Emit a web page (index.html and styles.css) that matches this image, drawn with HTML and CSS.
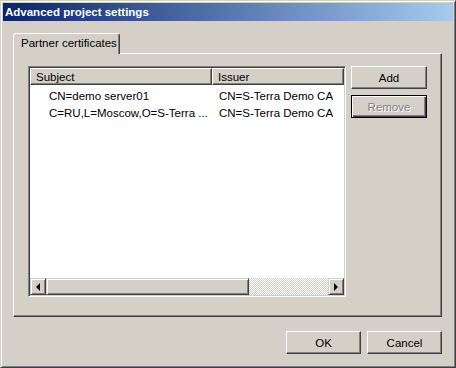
FILE: index.html
```html
<!DOCTYPE html>
<html lang="en">
<head>
    <meta charset="UTF-8">
    <title>Advanced project settings</title>
    <link rel="stylesheet" href="styles.css">
</head>
<body>
    <div class="dialog">
        <div class="titlebar">Advanced project settings</div>
        <div class="content">
            <div class="tabs">
                <div class="tab">Partner certificates</div>
            </div>
            <div class="tab-panel">
                <div class="listview">
                    <div class="lv-header">
                        <div class="lv-col col-subject">Subject</div>
                        <div class="lv-col col-issuer">Issuer</div>
                    </div>
                    <div class="lv-rows">
                        <div class="lv-row">
                            <div class="cell col-subject">CN=demo server01</div>
                            <div class="cell col-issuer">CN=S-Terra Demo CA</div>
                        </div>
                        <div class="lv-row">
                            <div class="cell col-subject">C=RU,L=Moscow,O=S-Terra ...</div>
                            <div class="cell col-issuer">CN=S-Terra Demo CA</div>
                        </div>
                    </div>
                    <div class="hscroll">
                        <div class="sb-btn"><span class="arrow-left"></span></div>
                        <div class="sb-track">
                            <div class="sb-thumb"></div>
                        </div>
                        <div class="sb-btn"><span class="arrow-right"></span></div>
                    </div>
                </div>
                <div class="side-buttons">
                    <button class="btn">Add</button>
                    <button class="btn btn-default" disabled>Remove</button>
                </div>
            </div>
            <div class="footer">
                <button class="btn btn-wide">OK</button>
                <button class="btn btn-wide">Cancel</button>
            </div>
        </div>
    </div>
</body>
</html>
```

FILE: styles.css
```css
* {
    box-sizing: border-box;
}

body {
    margin: 0;
    background: #d4d0c8;
    font-family: "Liberation Sans", Arial, sans-serif;
    font-size: 11.5px;
    color: #000;
}

/* window frame */
.dialog {
    width: 456px;
    height: 368px;
    display: flex;
    flex-direction: column;
    padding: 2px;
    background: #d4d0c8;
    border: 1px solid;
    border-color: #d4d0c8 #404040 #404040 #d4d0c8;
    box-shadow: inset 1px 1px #fff, inset -1px -1px #808080;
}

.titlebar {
    height: 18px;
    padding: 0 0 0 2px;
    line-height: 18px;
    font-weight: bold;
    color: #fff;
    background: linear-gradient(to right, #0a246a, #a6caf0);
}

.content {
    padding: 12px 11px 0 10px;
    display: flex;
    flex-direction: column;
}

/* tabs */
.tabs {
    display: flex;
    position: relative;
    z-index: 1;
}

.tab {
    width: 107px;
    height: 21px;
    margin-bottom: -1px;
    padding: 3px 0 0 7px;
    background: #d4d0c8;
    border: 1px solid;
    border-color: #fff #404040 transparent #fff;
    border-bottom: none;
    border-radius: 3px 3px 0 0;
    box-shadow: inset -1px 0 #808080;
}

.tab-panel {
    height: 264px;
    display: flex;
    align-items: flex-start;
    gap: 5px;
    padding: 12px 14px;
    border: 1px solid;
    border-color: #fff #404040 #404040 #fff;
    box-shadow: inset -1px -1px #808080;
}

/* list view */
.listview {
    width: 318px;
    height: 231px;
    display: flex;
    flex-direction: column;
    padding: 1px;
    background: #fff;
    border: 1px solid;
    border-color: #808080 #fff #fff #808080;
    box-shadow: inset 1px 1px #404040, inset -1px -1px #d4d0c8;
}

.lv-header {
    display: flex;
    height: 17px;
    background: #d4d0c8;
}

.lv-col {
    height: 17px;
    line-height: 16px;
    padding-left: 5px;
    border: 1px solid;
    border-color: #fff #404040 #404040 #fff;
    box-shadow: inset -1px -1px #808080;
}

.lv-col.col-issuer {
    flex: 1;
}

.col-subject {
    width: 182px;
}

.lv-rows {
    flex: 1;
    padding-top: 3px;
}

.lv-row {
    display: flex;
    height: 17px;
    line-height: 17px;
}

.cell {
    white-space: nowrap;
    overflow: hidden;
}

.cell.col-subject {
    padding-left: 19px;
}

.cell.col-issuer {
    padding-left: 7px;
}

/* horizontal scrollbar */
.hscroll {
    height: 17px;
    display: flex;
}

.sb-btn,
.sb-thumb {
    background: #d4d0c8;
    border: 1px solid;
    border-color: #d4d0c8 #404040 #404040 #d4d0c8;
    box-shadow: inset 1px 1px #fff, inset -1px -1px #808080;
}

.sb-btn {
    width: 16px;
    display: flex;
    align-items: center;
    justify-content: center;
}

.arrow-left,
.arrow-right {
    width: 0;
    height: 0;
    border-top: 4px solid transparent;
    border-bottom: 4px solid transparent;
}

.arrow-left {
    border-right: 4px solid #000;
}

.arrow-right {
    border-left: 4px solid #000;
}

.sb-track {
    flex: 1;
    background: repeating-conic-gradient(#d4d0c8 0 25%, #fff 0 50%) 0 0 / 2px 2px;
}

.sb-thumb {
    width: 203px;
    height: 100%;
}

/* buttons */
.side-buttons {
    display: flex;
    flex-direction: column;
    gap: 6px;
}

.btn {
    width: 76px;
    height: 23px;
    padding: 0;
    font-family: inherit;
    font-size: 11.5px;
    color: #000;
    background: #d4d0c8;
    border: 1px solid;
    border-color: #fff #404040 #404040 #fff;
    box-shadow: inset -1px -1px #808080;
}

.btn-default {
    border-color: #000;
    box-shadow: inset 1px 1px #fff, inset -1px -1px #404040, inset -2px -2px #808080;
}

.btn:disabled {
    color: #808080;
    text-shadow: 1px 1px #fff;
}

.btn-wide {
    width: 75px;
}

.footer {
    display: flex;
    justify-content: flex-end;
    gap: 6px;
    margin-top: 14px;
}
```
